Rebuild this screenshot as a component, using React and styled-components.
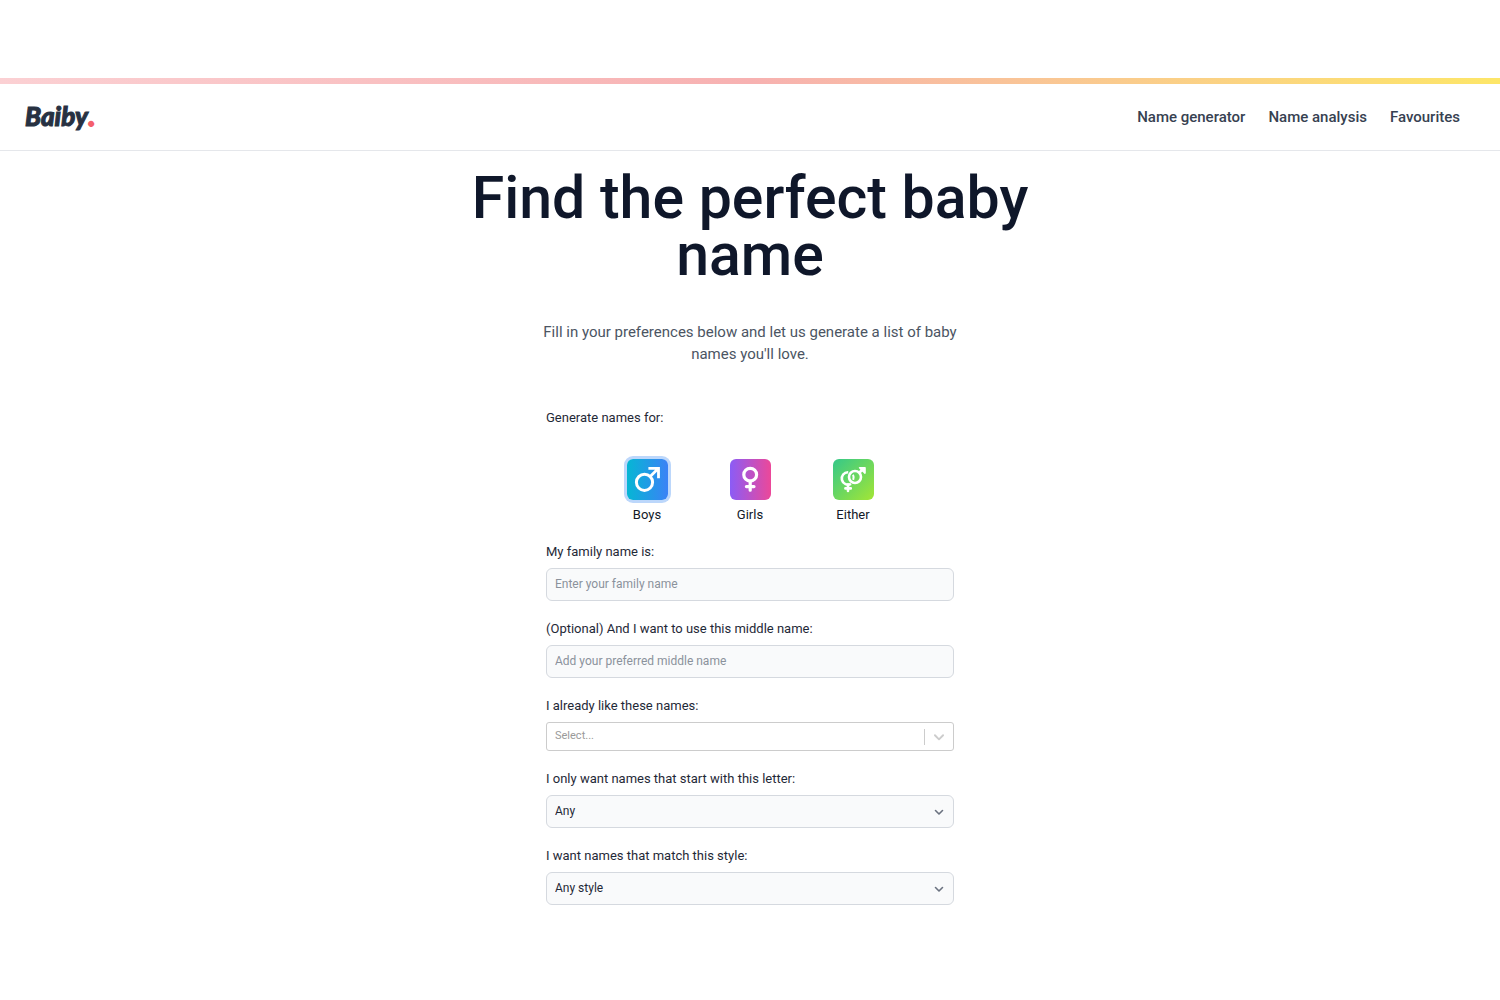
import React, { useState } from "react";
import styled, { createGlobalStyle } from "styled-components";

const GlobalStyle = createGlobalStyle`
  *, *::before, *::after { box-sizing: border-box; }
  body {
    margin: 0;
    background: #fff;
    color: #1f2937;
    font-family: Roboto, "Noto Sans", sans-serif;
  }
  input, select, button { font: inherit; color: inherit; }
`;

const Page = styled.div`
  padding-top: 78px;
`;

const Rainbow = styled.div`
  height: 6px;
  background: linear-gradient(to right, #fbd0d3, #f7b1b1 50%, #fde668);
`;

const Header = styled.header`
  display: flex;
  align-items: center;
  justify-content: space-between;
  height: 67px;
  padding: 0 40px 0 25px;
  border-bottom: 1px solid #e5e7eb;
`;

const Logo = styled.a`
  padding-bottom: 2px;
  color: #273142;
  font-family: Lato, sans-serif;
  font-size: 26px;
  font-weight: 900;
  font-style: italic;
  line-height: 32px;
  text-decoration: none;
  -webkit-text-stroke: 1px currentColor;
`;

const LogoDot = styled.span`
  padding-left: 1px;
  color: #f4606c;
  -webkit-text-stroke: 2px currentColor;
`;

const Nav = styled.nav`
  display: flex;
  gap: 23px;
`;

const NavLink = styled.a`
  color: #374151;
  font-size: 15px;
  font-weight: 500;
  line-height: 24px;
  text-decoration: none;
`;

const Main = styled.main`
  display: flex;
  flex-direction: column;
  align-items: center;
  padding: 18px 16px 80px;
`;

const Title = styled.h1`
  max-width: 600px;
  margin: 0;
  color: #0f172a;
  font-size: 59px;
  font-weight: 500;
  line-height: 57px;
  text-align: center;
`;

const Intro = styled.p`
  max-width: 420px;
  margin: 38px 0 0;
  color: #4b5563;
  font-size: 15px;
  line-height: 22px;
  text-align: center;
`;

const Form = styled.form`
  display: flex;
  flex-direction: column;
  gap: 18px;
  width: 100%;
  max-width: 408px;
  margin-top: 43px;
`;

const GenderGroup = styled.fieldset`
  min-width: 0;
  margin: 0;
  padding: 0;
  border: 0;
`;

const Legend = styled.legend`
  padding: 0;
  font-size: 13px;
  line-height: 20px;
`;

const GenderRow = styled.div`
  display: flex;
  justify-content: center;
  gap: 62px;
  padding-top: 31px;
`;

const GenderOption = styled.label`
  display: flex;
  flex-direction: column;
  align-items: center;
  gap: 6px;
  width: 41px;
  font-size: 13px;
  line-height: 18px;
  color: #111827;
  cursor: pointer;
`;

const GenderTile = styled.span`
  display: grid;
  position: relative;
  width: 41px;
  height: 41px;
  border-radius: 6px;
  background: ${(p) => p.$fill};
  color: #fff;
  &:has(input:checked) { box-shadow: 0 0 0 3px #bcd7fb; }
`;

const GenderRadio = styled.input`
  position: absolute;
  inset: 0;
  width: 100%;
  height: 100%;
  margin: 0;
  opacity: 0;
  cursor: pointer;
`;

const Field = styled.div`
  display: flex;
  flex-direction: column;
  gap: 6px;
`;

const Label = styled.label`
  font-size: 13px;
  line-height: 20px;
`;

const TextInput = styled.input`
  width: 100%;
  height: 33px;
  padding: 0 8px 2px;
  border: 1px solid #d5d9df;
  border-radius: 6px;
  background: #f9fafb;
  font-size: 12px;
  &::placeholder { color: #8b929c; opacity: 1; }
`;

const SelectFrame = styled.div`
  display: grid;
  align-items: center;
  color: #6b7280;
  & > * { grid-area: 1 / 1; }
  & > svg { justify-self: end; margin-right: 9px; pointer-events: none; }
`;

const Select = styled.select`
  appearance: none;
  width: 100%;
  height: 33px;
  padding: 0 30px 2px 8px;
  border: 1px solid #d5d9df;
  border-radius: 6px;
  background: #f9fafb;
  color: #1f2937;
  font-size: 12px;
`;

const ComboBox = styled.div`
  display: flex;
  align-items: center;
  height: 29px;
  border: 1px solid #cccccc;
  border-radius: 3px;
  background: #fff;
`;

const ComboInput = styled.input`
  flex: 1;
  min-width: 0;
  height: 100%;
  padding: 0 8px 2px;
  border: 0;
  background: transparent;
  font-size: 11px;
  &::placeholder { color: #9a9a9a; opacity: 1; }
`;

const ComboButton = styled.button`
  display: grid;
  place-items: center;
  width: 29px;
  height: 16px;
  padding: 0;
  border: 0;
  border-left: 1px solid #cccccc;
  background: transparent;
  color: #cccccc;
`;

const Chevron = ({ size = 12 }) => (
  <svg width={size} height={size} viewBox="0 0 12 12" fill="none" stroke="currentColor" strokeWidth="1.6" strokeLinecap="round" strokeLinejoin="round" aria-hidden="true">
    <path d="M2.5 4.5 6 8l3.5-3.5" />
  </svg>
);

const Glyph = ({ weight, children }) => (
  <svg width="41" height="41" viewBox="0 0 41 41" fill="none" stroke="currentColor" strokeWidth={weight} aria-hidden="true">
    {children}
  </svg>
);

const MaleIcon = () => (
  <Glyph weight="3">
    <circle cx="17.5" cy="23.3" r="8.1" />
    <path d="M23.2 17.6 31 9.8M21.4 9.3h10.1v10" strokeWidth="2.8" />
  </Glyph>
);

const FemaleIcon = () => (
  <Glyph weight="3.2">
    <circle cx="20.2" cy="15.7" r="6.4" />
    <path d="M20.2 22v9.2M16.4 27.6h7.6" strokeLinecap="round" />
  </Glyph>
);

const EitherIcon = () => (
  <Glyph weight="2.6">
    <circle cx="22" cy="18" r="6" />
    <path d="M15.2 13.2A6.2 6.2 0 1 0 18 24.8" />
    <path d="M20 15.8a6 6 0 0 1 .2 5" strokeWidth="2" />
    <path d="M15 25.6v6.4M12.4 29.4h5.4" strokeLinecap="round" />
    <path d="m26 14 4-4" />
    <path d="M26.6 8.7h5.4v5.4Z" fill="currentColor" strokeWidth="1.6" strokeLinejoin="round" />
  </Glyph>
);

const genders = [
  { id: "boys", label: "Boys", Icon: MaleIcon, fill: "linear-gradient(to right, #06b6d4, #3b82f6)" },
  { id: "girls", label: "Girls", Icon: FemaleIcon, fill: "linear-gradient(to right, #8b5cf6, #ec4899)" },
  { id: "either", label: "Either", Icon: EitherIcon, fill: "linear-gradient(to bottom right, #34c889, #a3e635)" },
];

export default function App() {
  const [gender, setGender] = useState("boys");
  return (
    <Page>
      <GlobalStyle />
      <Rainbow />
      <Header>
        <Logo href="#">Baiby<LogoDot>.</LogoDot></Logo>
        <Nav>
          <NavLink href="#generator">Name generator</NavLink>
          <NavLink href="#analysis">Name analysis</NavLink>
          <NavLink href="#favourites">Favourites</NavLink>
        </Nav>
      </Header>
      <Main>
        <Title>Find the perfect baby name</Title>
        <Intro>Fill in your preferences below and let us generate a list of baby names you'll love.</Intro>
        <Form>
          <GenderGroup>
            <Legend>Generate names for:</Legend>
            <GenderRow>
              {genders.map(({ id, label, Icon, fill }) => (
                <GenderOption key={id}>
                  <GenderTile $fill={fill}>
                    <GenderRadio type="radio" name="gender" value={id} checked={gender === id} onChange={() => setGender(id)} />
                    <Icon />
                  </GenderTile>
                  {label}
                </GenderOption>
              ))}
            </GenderRow>
          </GenderGroup>
          <Field>
            <Label htmlFor="family">My family name is:</Label>
            <TextInput id="family" placeholder="Enter your family name" />
          </Field>
          <Field>
            <Label htmlFor="middle">(Optional) And I want to use this middle name:</Label>
            <TextInput id="middle" placeholder="Add your preferred middle name" />
          </Field>
          <Field>
            <Label htmlFor="liked">I already like these names:</Label>
            <ComboBox>
              <ComboInput id="liked" role="combobox" aria-expanded="false" placeholder="Select..." />
              <ComboButton type="button" aria-label="Show names"><Chevron size={14} /></ComboButton>
            </ComboBox>
          </Field>
          <Field>
            <Label htmlFor="letter">I only want names that start with this letter:</Label>
            <SelectFrame>
              <Select id="letter"><option>Any</option></Select>
              <Chevron />
            </SelectFrame>
          </Field>
          <Field>
            <Label htmlFor="style">I want names that match this style:</Label>
            <SelectFrame>
              <Select id="style"><option>Any style</option></Select>
              <Chevron />
            </SelectFrame>
          </Field>
        </Form>
      </Main>
    </Page>
  );
}
